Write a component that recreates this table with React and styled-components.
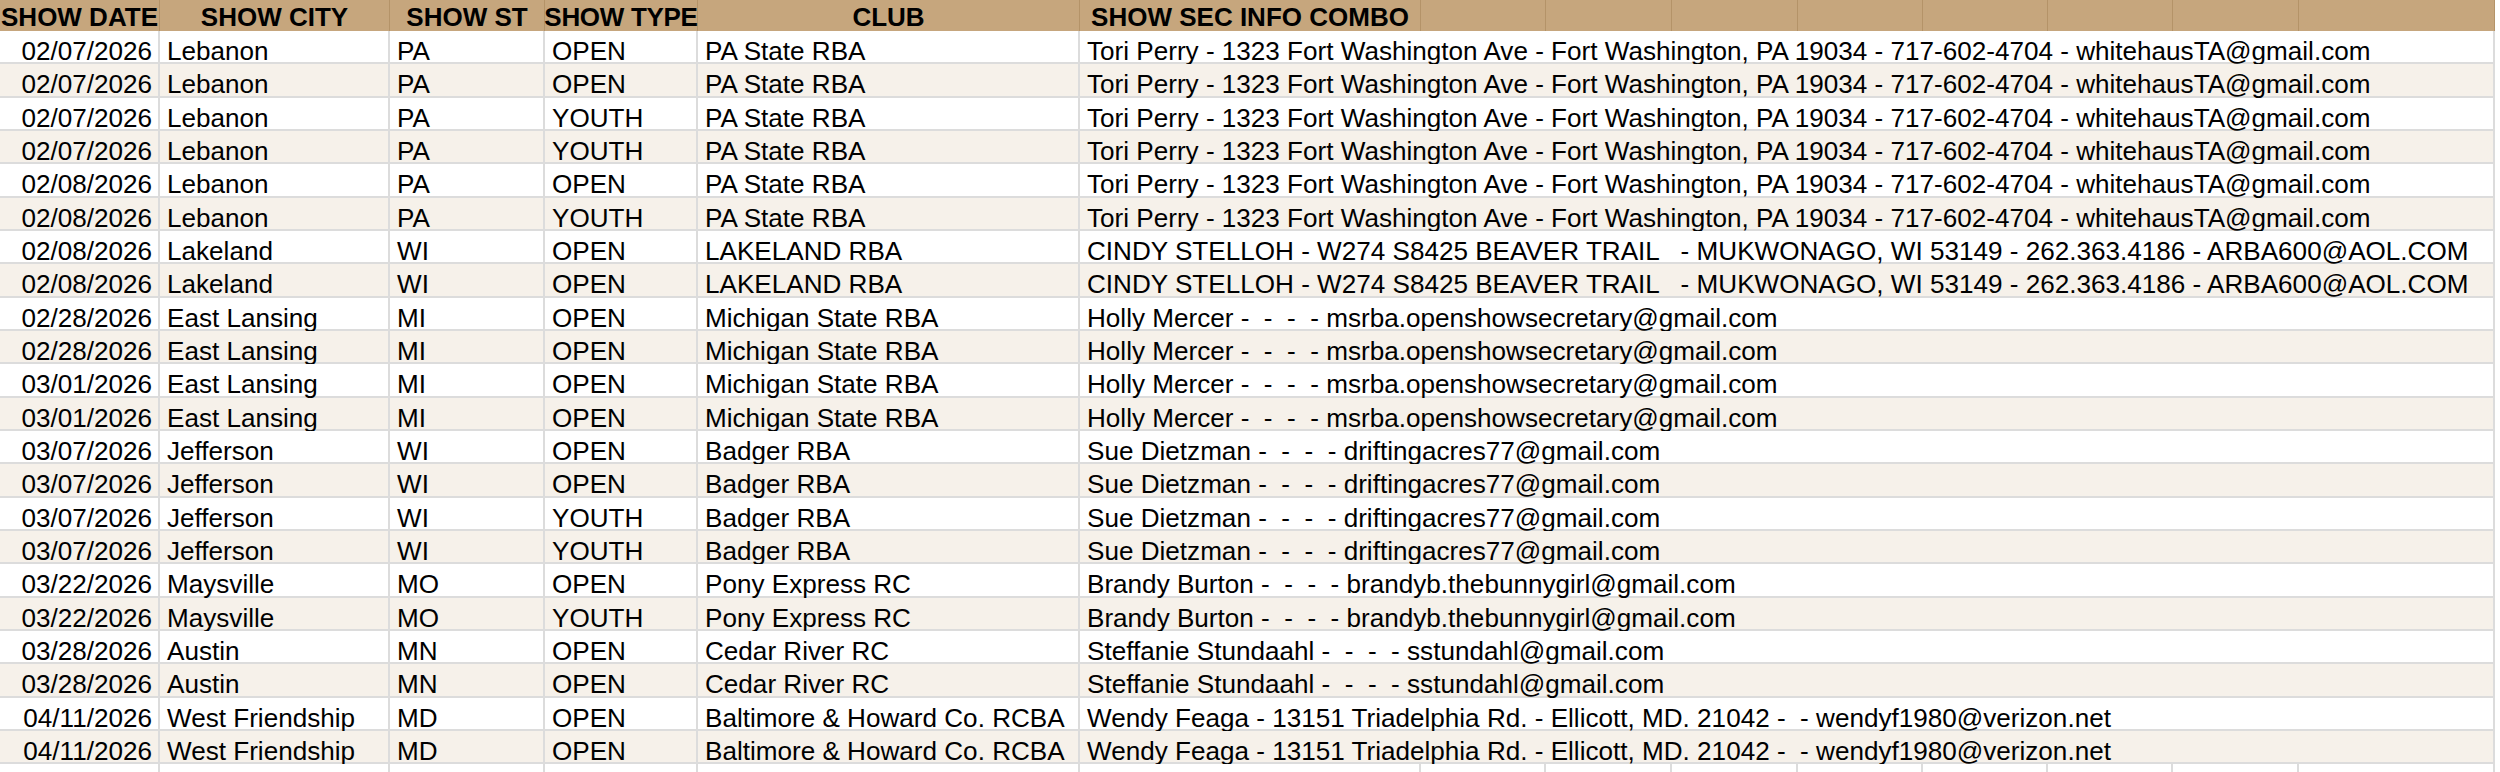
import React from "react";
import styled, { createGlobalStyle, css } from "styled-components";

const GlobalStyle = createGlobalStyle`
  html, body {
    margin: 0;
    padding: 0;
    background: #ffffff;
    overflow: hidden;
  }
  body {
    font-family: "Liberation Sans", Arial, Helvetica, sans-serif;
    color: #000000;
  }
`;

const HEAD_COLS = "160px 230px 155px 153px 382px 341px 125px 126px 126px 125px 125px 125px 126px 196px";
const DATA_COLS = "160px 230px 155px 153px 382px 1415px";

const Sheet = styled.div`
  width: 2495px;
  display: flex;
  flex-direction: column;
`;

const HeaderRow = styled.div`
  display: grid;
  grid-template-columns: ${HEAD_COLS};
  height: 31px;
  background: #c6a67d;
`;

const HeaderCell = styled.div`
  box-sizing: border-box;
  border-right: 1px solid #b49368;
  display: flex;
  align-items: flex-end;
  justify-content: center;
  padding-bottom: 1px;
  font-size: 26px;
  line-height: 1;
  font-weight: 700;
  white-space: nowrap;
  overflow: visible;
  letter-spacing: ${(p) => (p.$tight ? "-0.3px" : "0")};
`;

const DataRow = styled.div`
  display: grid;
  grid-template-columns: ${DATA_COLS};
  height: 33.333px;
  background: ${(p) => (p.$band ? "#f6f1ea" : "#ffffff")};
`;

const EmptyRow = styled.div`
  display: grid;
  grid-template-columns: ${HEAD_COLS};
  height: 33.333px;
  background: #ffffff;
`;

const Cell = styled.div`
  box-sizing: border-box;
  border-right: 2px solid #dcdcdc;
  border-bottom: 2px solid #dcdcdc;
  display: flex;
  align-items: flex-end;
  padding: 0 7px 0 7px;
  font-size: 26.1px;
  line-height: 0.85;
  white-space: pre;
  overflow: visible;
  ${(p) =>
    p.$right &&
    css`
      justify-content: flex-end;
      padding-right: 6px;
    `}
`;

const EmptyCell = styled.div`
  box-sizing: border-box;
  border-right: 2px solid #dcdcdc;
`;

const HEADERS = [
  "SHOW DATE",
  "SHOW CITY",
  "SHOW ST",
  "SHOW TYPE",
  "CLUB",
  "SHOW SEC INFO COMBO",
  "",
  "",
  "",
  "",
  "",
  "",
  "",
  "",
];

const TORI =
  "Tori Perry - 1323 Fort Washington Ave - Fort Washington, PA 19034 - 717-602-4704 - whitehausTA@gmail.com";
const CINDY =
  "CINDY STELLOH - W274 S8425 BEAVER TRAIL   - MUKWONAGO, WI 53149 - 262.363.4186 - ARBA600@AOL.COM";
const HOLLY = "Holly Mercer -  -  -  - msrba.openshowsecretary@gmail.com";
const SUE = "Sue Dietzman -  -  -  - driftingacres77@gmail.com";
const BRANDY = "Brandy Burton -  -  -  - brandyb.thebunnygirl@gmail.com";
const STEF = "Steffanie Stundaahl -  -  -  - sstundahl@gmail.com";
const WENDY =
  "Wendy Feaga - 13151 Triadelphia Rd. - Ellicott, MD. 21042 -  - wendyf1980@verizon.net";

const ROWS = [
  ["02/07/2026", "Lebanon", "PA", "OPEN", "PA State RBA", TORI],
  ["02/07/2026", "Lebanon", "PA", "OPEN", "PA State RBA", TORI],
  ["02/07/2026", "Lebanon", "PA", "YOUTH", "PA State RBA", TORI],
  ["02/07/2026", "Lebanon", "PA", "YOUTH", "PA State RBA", TORI],
  ["02/08/2026", "Lebanon", "PA", "OPEN", "PA State RBA", TORI],
  ["02/08/2026", "Lebanon", "PA", "YOUTH", "PA State RBA", TORI],
  ["02/08/2026", "Lakeland", "WI", "OPEN", "LAKELAND RBA", CINDY],
  ["02/08/2026", "Lakeland", "WI", "OPEN", "LAKELAND RBA", CINDY],
  ["02/28/2026", "East Lansing", "MI", "OPEN", "Michigan State RBA", HOLLY],
  ["02/28/2026", "East Lansing", "MI", "OPEN", "Michigan State RBA", HOLLY],
  ["03/01/2026", "East Lansing", "MI", "OPEN", "Michigan State RBA", HOLLY],
  ["03/01/2026", "East Lansing", "MI", "OPEN", "Michigan State RBA", HOLLY],
  ["03/07/2026", "Jefferson", "WI", "OPEN", "Badger RBA", SUE],
  ["03/07/2026", "Jefferson", "WI", "OPEN", "Badger RBA", SUE],
  ["03/07/2026", "Jefferson", "WI", "YOUTH", "Badger RBA", SUE],
  ["03/07/2026", "Jefferson", "WI", "YOUTH", "Badger RBA", SUE],
  ["03/22/2026", "Maysville", "MO", "OPEN", "Pony Express RC", BRANDY],
  ["03/22/2026", "Maysville", "MO", "YOUTH", "Pony Express RC", BRANDY],
  ["03/28/2026", "Austin", "MN", "OPEN", "Cedar River RC", STEF],
  ["03/28/2026", "Austin", "MN", "OPEN", "Cedar River RC", STEF],
  ["04/11/2026", "West Friendship", "MD", "OPEN", "Baltimore & Howard Co. RCBA", WENDY],
  ["04/11/2026", "West Friendship", "MD", "OPEN", "Baltimore & Howard Co. RCBA", WENDY],
];

export default function App() {
  return (
    <>
      <GlobalStyle />
      <Sheet>
        <HeaderRow>
          {HEADERS.map((h, i) => (
            <HeaderCell key={i} $tight={h === "SHOW TYPE"}>
              {h}
            </HeaderCell>
          ))}
        </HeaderRow>
        {ROWS.map((r, i) => (
          <DataRow key={i} $band={i % 2 === 1}>
            <Cell $right>{r[0]}</Cell>
            <Cell>{r[1]}</Cell>
            <Cell>{r[2]}</Cell>
            <Cell>{r[3]}</Cell>
            <Cell>{r[4]}</Cell>
            <Cell>{r[5]}</Cell>
          </DataRow>
        ))}
        <EmptyRow>
          {HEADERS.map((_, i) => (
            <EmptyCell key={i} />
          ))}
        </EmptyRow>
      </Sheet>
    </>
  );
}
